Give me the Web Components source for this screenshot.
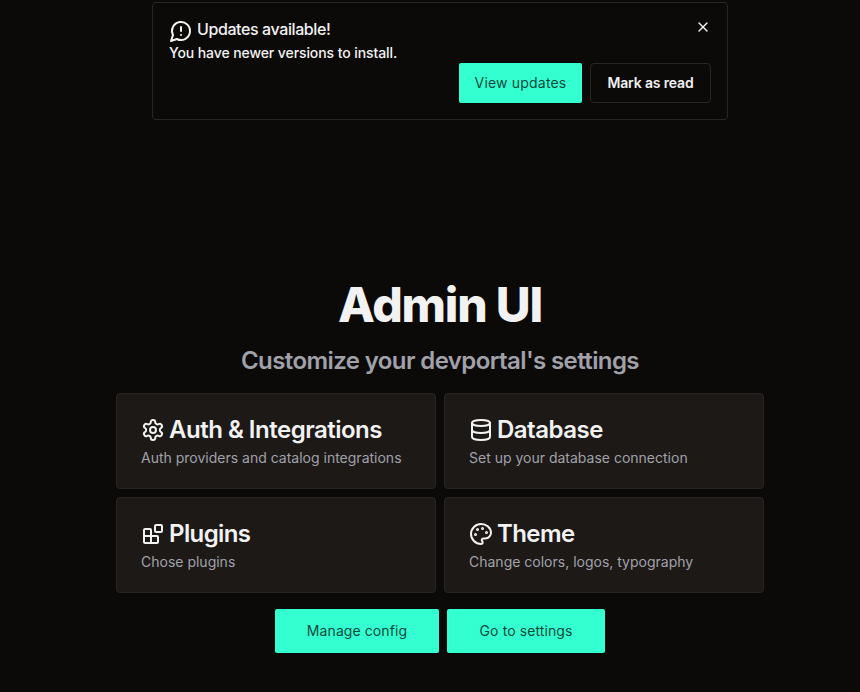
<!DOCTYPE html>
<html lang="en"><head><meta charset="utf-8"><title>Admin UI</title>
<style>
html{background:#0c0a09}
body{margin:0;font-family:Inter,"Liberation Sans",sans-serif;color:#f2f2f2;background:#0c0a09;height:692px;overflow:hidden}
</style></head><body>
<admin-page></admin-page>
<script>
const icons={
alert:'<path d="M7.9 20A9 9 0 1 0 4 16.1L2 22Z"/><path d="M12 8v4"/><path d="M12 16h.01"/>',
close:'<path d="M18 6 6 18"/><path d="m6 6 12 12"/>',
gear:'<path d="M12.22 2h-.44a2 2 0 0 0-2 2v.18a2 2 0 0 1-1 1.73l-.43.25a2 2 0 0 1-2 0l-.15-.08a2 2 0 0 0-2.73.73l-.22.38a2 2 0 0 0 .73 2.73l.15.1a2 2 0 0 1 1 1.72v.51a2 2 0 0 1-1 1.74l-.15.09a2 2 0 0 0-.73 2.73l.22.38a2 2 0 0 0 2.73.73l.15-.08a2 2 0 0 1 2 0l.43.25a2 2 0 0 1 1 1.73V20a2 2 0 0 0 2 2h.44a2 2 0 0 0 2-2v-.18a2 2 0 0 1 1-1.73l.43-.25a2 2 0 0 1 2 0l.15.08a2 2 0 0 0 2.73-.73l.22-.39a2 2 0 0 0-.73-2.73l-.15-.08a2 2 0 0 1-1-1.74v-.5a2 2 0 0 1 1-1.74l.15-.09a2 2 0 0 0 .73-2.73l-.22-.38a2 2 0 0 0-2.73-.73l-.15.08a2 2 0 0 1-2 0l-.43-.25a2 2 0 0 1-1-1.73V4a2 2 0 0 0-2-2z"/><circle cx="12" cy="12" r="3"/>',
database:'<ellipse cx="12" cy="5" rx="9" ry="3"/><path d="M3 5v14a9 3 0 0 0 18 0V5"/><path d="M3 12a9 3 0 0 0 18 0"/>',
blocks:'<rect width="7" height="7" x="14" y="3" rx="1"/><path d="M10 21V8a1 1 0 0 0-1-1H4a1 1 0 0 0-1 1v12a1 1 0 0 0 1 1h12a1 1 0 0 0 1-1v-5a1 1 0 0 0-1-1H3"/>',
palette:'<g fill="currentColor"><circle cx="13.5" cy="6.5" r=".5"/><circle cx="17.5" cy="10.5" r=".5"/><circle cx="8.5" cy="7.5" r=".5"/><circle cx="6.5" cy="12.5" r=".5"/></g><path d="M12 2C6.5 2 2 6.5 2 12s4.5 10 10 10c.926 0 1.648-.746 1.648-1.688 0-.437-.18-.835-.437-1.125-.29-.289-.438-.652-.438-1.125a1.64 1.64 0 0 1 1.668-1.668h1.996c3.051 0 5.555-2.503 5.555-5.554C21.965 6.012 17.461 2 12 2z"/>'
};
function define(name,render){customElements.define(name,class extends HTMLElement{connectedCallback(){if(!this.shadowRoot)this.attachShadow({mode:'open'}).innerHTML=render(this)}})}
define('ui-icon',e=>`<style>:host{display:block;flex:none;width:24px;height:24px}svg{display:block;width:100%;height:100%;fill:none;stroke:currentColor;stroke-width:2;stroke-linecap:round;stroke-linejoin:round}</style><svg viewBox="0 0 24 24">${icons[e.getAttribute('name')]}</svg>`);
define('ui-button',()=>`<style>:host{display:block}button{all:unset;box-sizing:border-box;display:flex;align-items:center;justify-content:center;width:100%;height:40px;border-radius:2px;background:#33ffd1;color:#0f4a3c;font-size:14px;line-height:20px;font-weight:400;letter-spacing:.19px;cursor:pointer;white-space:nowrap}:host([large]) button{height:44px;letter-spacing:.09px}:host([outline]) button{background:transparent;border:1px solid #292524;border-radius:4px;color:#f2f2f2;font-weight:600;letter-spacing:-.16px}</style><button><slot></slot></button>`);
define('update-alert',()=>`<style>:host{box-sizing:border-box;display:flex;flex-direction:column;position:relative;width:576px;height:118px;border:1px solid #292524;border-radius:4px;padding:16px}
.head{display:flex;align-items:flex-start;gap:4px;height:24px;font-size:16px;line-height:20px;font-weight:500;letter-spacing:-.4px}
p{margin:0;font-size:14px;line-height:20px;font-weight:500;letter-spacing:-.09px}.actions{display:flex;justify-content:flex-end;gap:8px}
.primary{width:123px}.secondary{width:121px}.x{position:absolute;right:16px;top:16px;width:16px;height:16px}</style>
<div class="head"><ui-icon name="alert"></ui-icon><span>Updates available!</span></div><p>You have newer versions to install.</p><div class="actions"><ui-button class="primary">View updates</ui-button><ui-button outline class="secondary">Mark as read</ui-button></div><ui-icon class="x" name="close"></ui-icon>`);
define('setting-card',e=>`<style>:host{box-sizing:border-box;display:block;height:96px;border:1px solid #292524;border-radius:4px;background:#1c1917;padding:20px 24px}
h3{display:flex;align-items:center;gap:4px;margin:0;height:32px;font-size:24px;line-height:32px;font-weight:600;letter-spacing:var(--title-spacing,-.6px)}p{margin:2px 0 0;font-size:14px;line-height:20px;color:#a1a1aa}</style><h3><ui-icon name="${e.getAttribute('icon')}"></ui-icon><span><slot name="title"></slot></span></h3><p><slot></slot></p>`);
define('admin-page',()=>`<style>:host{display:flex;flex-direction:column;align-items:center;width:880px;height:692px;padding-top:2px;box-sizing:border-box}
h1{margin:161px 0 0;font-size:48px;line-height:48px;font-weight:800;letter-spacing:-1.2px}h2{margin:16px 0 0;font-size:24px;line-height:32px;font-weight:600;letter-spacing:-.6px;color:#a1a1aa}
.grid{display:grid;grid-template-columns:320px 320px;gap:8px;margin-top:16px}.grid [icon=gear]{--title-spacing:-.5px}.grid [icon=database]{--title-spacing:-.5px}.actions{display:flex;gap:8px;margin-top:16px}.config{width:164px}.settings{width:158px}</style>
<update-alert></update-alert><h1>Admin UI</h1><h2>Customize your devportal's settings</h2><div class="grid">
<setting-card icon="gear"><span slot="title">Auth &amp; Integrations</span>Auth providers and catalog integrations</setting-card>
<setting-card icon="database"><span slot="title">Database</span>Set up your database connection</setting-card>
<setting-card icon="blocks"><span slot="title">Plugins</span>Chose plugins</setting-card>
<setting-card icon="palette"><span slot="title">Theme</span>Change colors, logos, typography</setting-card></div>
<div class="actions"><ui-button large class="config">Manage config</ui-button><ui-button large class="settings">Go to settings</ui-button></div>`);
</script></body></html>
